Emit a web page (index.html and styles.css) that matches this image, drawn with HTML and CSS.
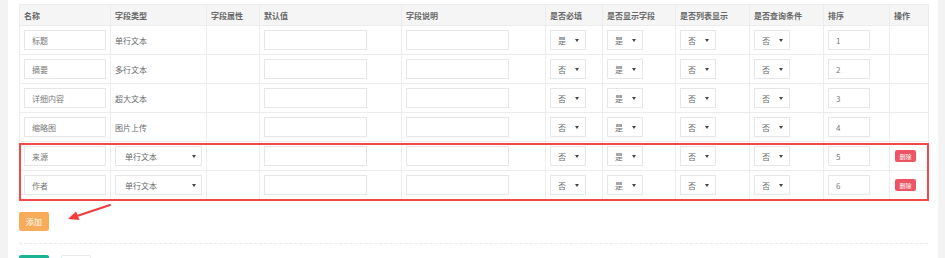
FILE: index.html
```html
<!DOCTYPE html>
<html lang="zh">
<head>
<meta charset="utf-8">
<link rel="stylesheet" href="styles.css">
</head>
<body>
<div class="panel">
  <table class="fields">
    <colgroup>
      <col class="w1"><col class="w2"><col class="w3"><col class="w4"><col class="w5"><col class="w6"><col class="w7"><col class="w8"><col class="w9"><col class="w10"><col class="w11">
    </colgroup>
    <thead>
      <tr><th>名称</th><th>字段类型</th><th>字段属性</th><th>默认值</th><th>字段说明</th><th>是否必填</th><th>是否显示字段</th><th>是否列表显示</th><th>是否查询条件</th><th>排序</th><th>操作</th></tr>
    </thead>
    <tbody>
      <tr>
        <td><input class="inp name" value="标题"></td><td>单行文本</td><td></td>
        <td><input class="inp def"></td><td><input class="inp desc"></td>
        <td><span class="sel"><span>是</span></span></td><td><span class="sel"><span>是</span></span></td><td><span class="sel"><span>否</span></span></td><td><span class="sel"><span>否</span></span></td>
        <td><input class="inp sort" value="1"></td><td></td>
      </tr>
      <tr>
        <td><input class="inp name" value="摘要"></td><td>多行文本</td><td></td>
        <td><input class="inp def"></td><td><input class="inp desc"></td>
        <td><span class="sel"><span>否</span></span></td><td><span class="sel"><span>是</span></span></td><td><span class="sel"><span>否</span></span></td><td><span class="sel"><span>否</span></span></td>
        <td><input class="inp sort" value="2"></td><td></td>
      </tr>
      <tr>
        <td><input class="inp name" value="详细内容"></td><td>超大文本</td><td></td>
        <td><input class="inp def"></td><td><input class="inp desc"></td>
        <td><span class="sel"><span>否</span></span></td><td><span class="sel"><span>是</span></span></td><td><span class="sel"><span>否</span></span></td><td><span class="sel"><span>否</span></span></td>
        <td><input class="inp sort" value="3"></td><td></td>
      </tr>
      <tr>
        <td><input class="inp name" value="缩略图"></td><td>图片上传</td><td></td>
        <td><input class="inp def"></td><td><input class="inp desc"></td>
        <td><span class="sel"><span>否</span></span></td><td><span class="sel"><span>是</span></span></td><td><span class="sel"><span>否</span></span></td><td><span class="sel"><span>否</span></span></td>
        <td><input class="inp sort" value="4"></td><td></td>
      </tr>
      <tr>
        <td><input class="inp name" value="来源"></td><td><span class="sel wide"><span>单行文本</span></span></td><td></td>
        <td><input class="inp def"></td><td><input class="inp desc"></td>
        <td><span class="sel"><span>否</span></span></td><td><span class="sel"><span>是</span></span></td><td><span class="sel"><span>否</span></span></td><td><span class="sel"><span>否</span></span></td>
        <td><input class="inp sort" value="5"></td><td><span class="btn-del">删除</span></td>
      </tr>
      <tr>
        <td><input class="inp name" value="作者"></td><td><span class="sel wide"><span>单行文本</span></span></td><td></td>
        <td><input class="inp def"></td><td><input class="inp desc"></td>
        <td><span class="sel"><span>否</span></span></td><td><span class="sel"><span>是</span></span></td><td><span class="sel"><span>否</span></span></td><td><span class="sel"><span>否</span></span></td>
        <td><input class="inp sort" value="6"></td><td><span class="btn-del">删除</span></td>
      </tr>
    </tbody>
  </table>
  <div class="add-row"><span class="btn-add">添加</span></div>
  <div class="dashed"></div>
  <div class="actions"><span class="btn-ok"></span><span class="btn-cancel"></span></div>
  <div class="mark-box"></div>
  <svg class="mark-arrow" width="50" height="24" viewBox="0 0 50 24">
    <path d="M46 2 L13 13" stroke="#f23c3c" stroke-width="2" fill="none" stroke-linecap="round"/>
    <path d="M4 16 L12 8.5 L15.5 17 Z" fill="#f23c3c"/>
  </svg>
</div>
</body>
</html>
```

FILE: styles.css
```css
html, body {
  margin: 0;
  padding: 0;
}
body {
  background: #f3f3f4;
  font-family: "Noto Sans CJK SC", "Open Sans", sans-serif;
  font-size: 8px;
  color: #676a6c;
}
.panel {
  position: relative;
  margin-left: 8px;
  width: 930px;
  height: 258px;
  background: #fff;
  padding: 4px 10px 0 11px;
  box-sizing: border-box;
  overflow: hidden;
}
.fields {
  width: 909px;
  table-layout: fixed;
  border-collapse: collapse;
}
.w1 { width: 91px; }
.w2 { width: 96px; }
.w3 { width: 53px; }
.w4 { width: 142px; }
.w5 { width: 144px; }
.w6 { width: 57px; }
.w7 { width: 73px; }
.w8 { width: 74px; }
.w9 { width: 74px; }
.w10 { width: 66px; }
.w11 { width: 39px; }
.fields th, .fields td {
  border: 1px solid #ececec;
  padding: 0 4px;
  text-align: left;
  vertical-align: middle;
  white-space: nowrap;
  overflow: hidden;
}
.fields th {
  background: #f5f5f6;
  height: 20px;
  font-weight: 600;
  color: #666;
}
.fields td {
  height: 28px;
}
.inp {
  display: block;
  box-sizing: border-box;
  height: 20px;
  border: 1px solid #e5e6e7;
  padding: 0 7px;
  font-family: inherit;
  font-size: 8px;
  color: #777;
  background: #fff;
  outline: none;
}
.inp.name { width: 82px; }
.inp.def { width: 103px; }
.inp.desc { width: 103px; }
.inp.sort { width: 42px; }
.sel {
  display: flex;
  align-items: center;
  justify-content: space-between;
  box-sizing: border-box;
  width: 36px;
  height: 20px;
  border: 1px solid #e5e6e7;
  padding: 0 6px 0 7px;
  color: #676a6c;
}
.sel::after {
  content: "";
  border-left: 2px solid transparent;
  border-right: 2px solid transparent;
  border-top: 3px solid #444;
}
.sel.wide {
  width: 87px;
  padding: 0 5px 0 9px;
}
.btn-del {
  display: inline-flex;
  align-items: center;
  justify-content: center;
  margin-left: 1px;
  width: 21px;
  height: 12px;
  border-radius: 2px;
  background: #ed5565;
  color: #fff;
  font-size: 6px;
}
.add-row {
  margin-top: 12px;
}
.btn-add, .btn-ok, .btn-cancel {
  display: inline-flex;
  align-items: center;
  justify-content: center;
  box-sizing: border-box;
  width: 30px;
  height: 19px;
  border-radius: 2px;
  font-size: 8px;
}
.btn-add {
  background: #f8ac59;
  color: #fff;
}
.dashed {
  margin: 12px 0 11px;
  border-top: 1px dashed #e7eaec;
}
.actions {
  display: flex;
  gap: 12px;
}
.btn-ok {
  background: #1ab394;
}
.btn-cancel {
  background: #fff;
  border: 1px solid #e7eaec;
}
.mark-box {
  position: absolute;
  left: 11px;
  top: 143px;
  width: 910px;
  height: 58px;
  box-sizing: border-box;
  border: 2px solid #f44848;
}
.mark-arrow {
  position: absolute;
  left: 56px;
  top: 203px;
}
```
